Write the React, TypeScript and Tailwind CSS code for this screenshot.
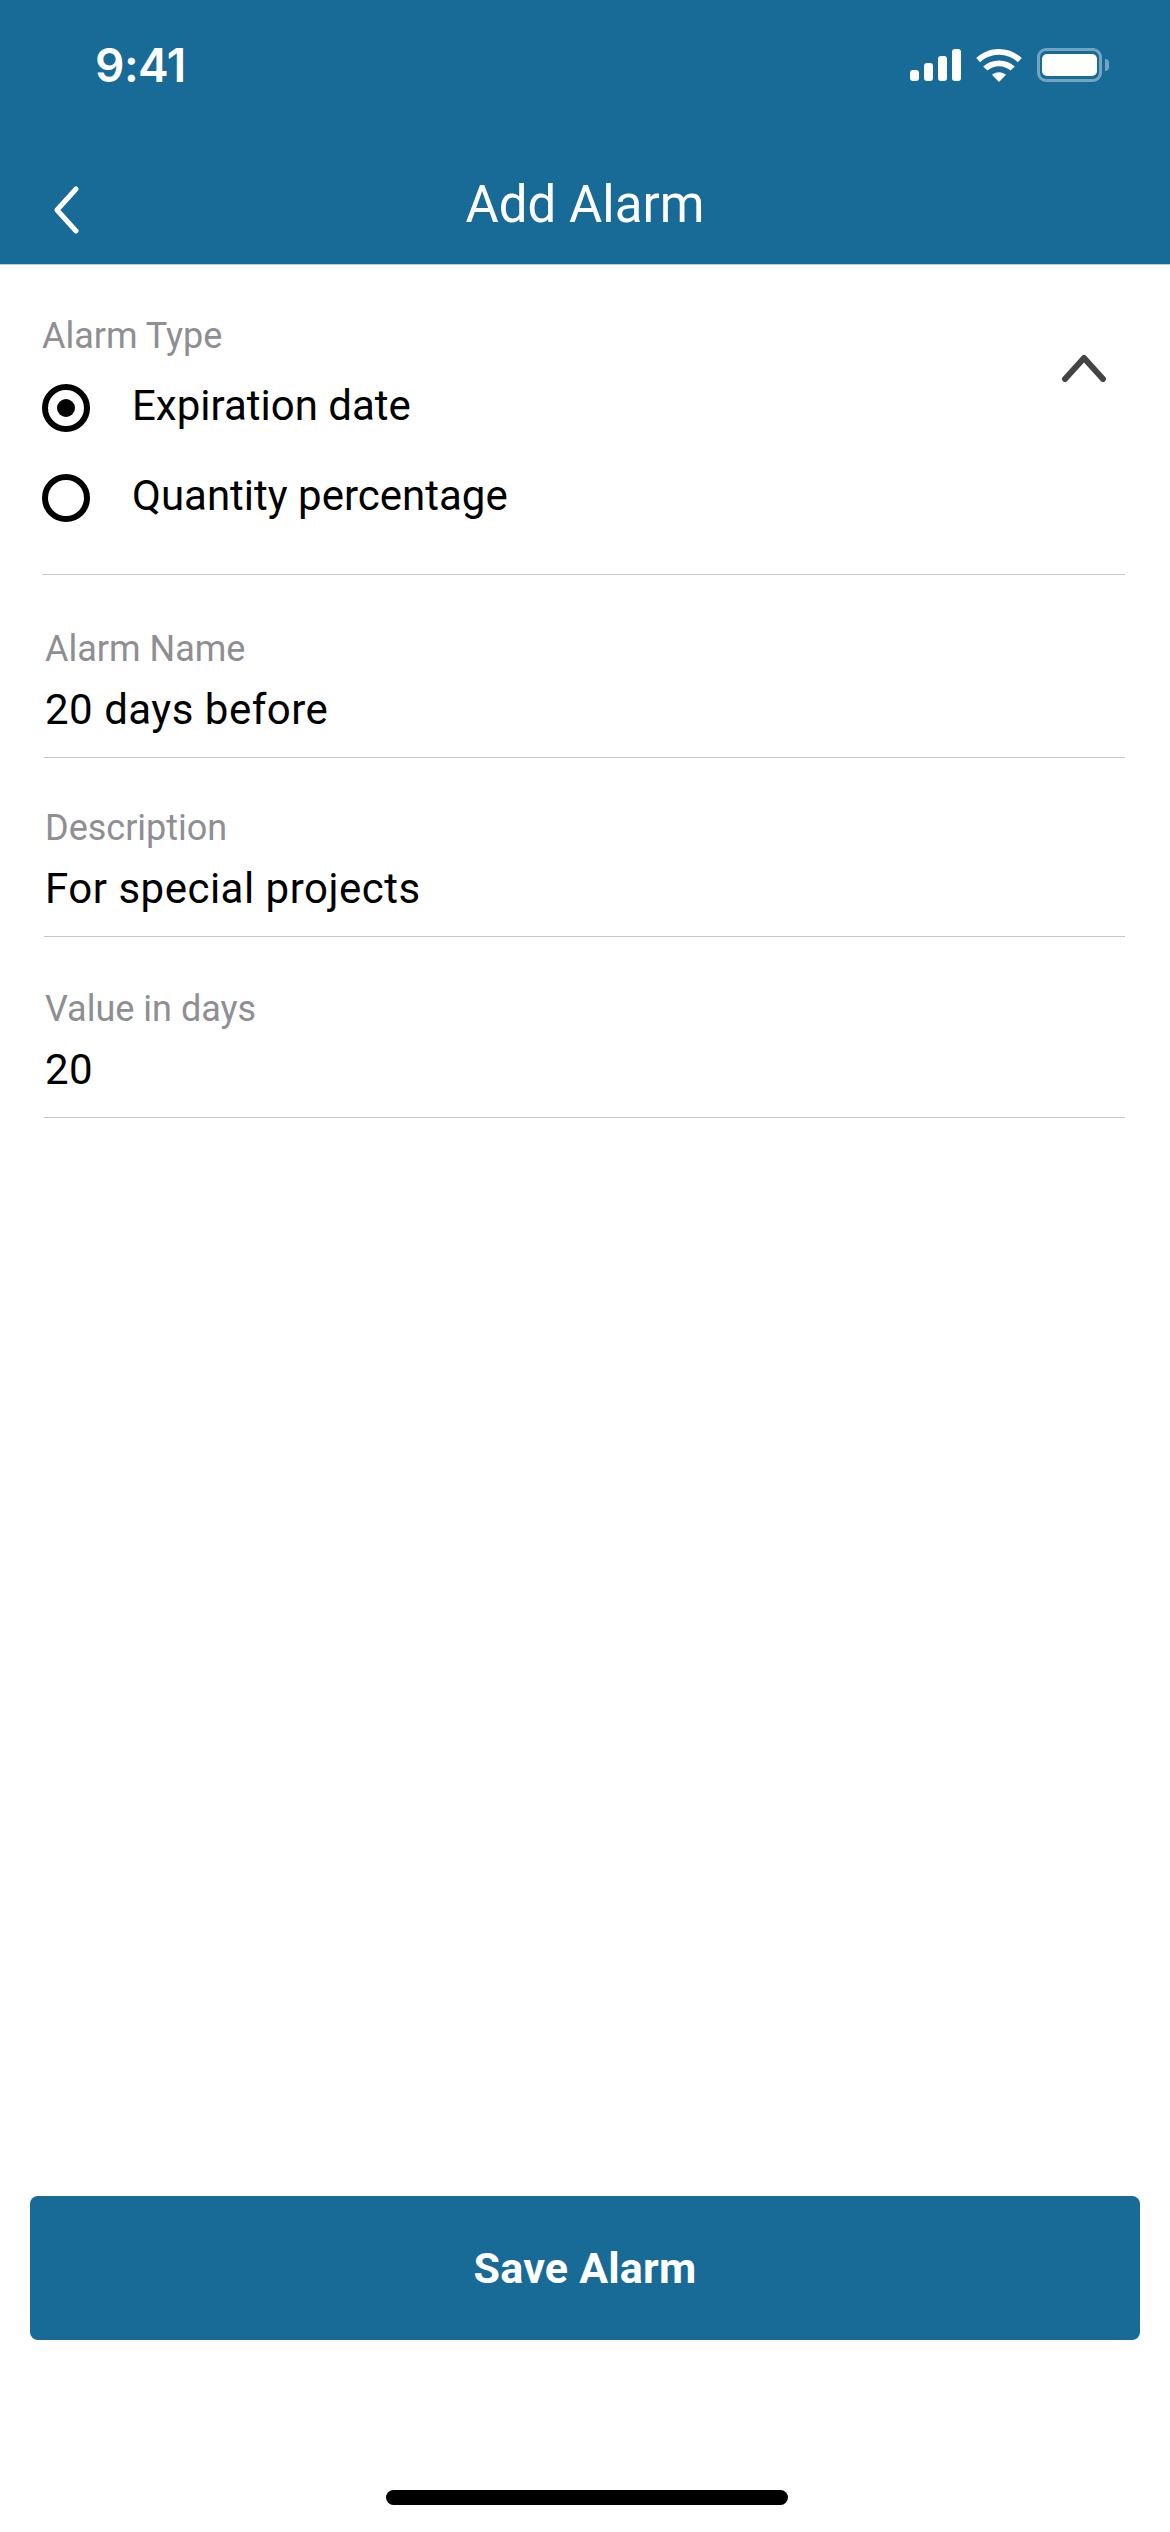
import React from "react";

const fieldData = [
  { label: "Alarm Name", value: "20 days before", height: "h-[183px]" },
  { label: "Description", value: "For special projects", height: "h-[179px]" },
  { label: "Value in days", value: "20", height: "h-[181px]" },
];

function SignalIcon() {
  return (
    <svg width="51" height="32" viewBox="0 0 51 32" fill="white">
      <rect x="0" y="21" width="9" height="11" rx="3" />
      <rect x="14" y="14" width="9" height="18" rx="3" />
      <rect x="28" y="7" width="9" height="25" rx="3" />
      <rect x="42" y="0" width="9" height="32" rx="3" />
    </svg>
  );
}

function WifiIcon() {
  return (
    <svg width="46" height="33" viewBox="0 0 46 33" fill="white">
      <path d="M23 0C31.8 0 39.8 3.4 45.8 9L41.8 13.2C36.9 8.6 30.3 5.8 23 5.8S9.1 8.6 4.2 13.2L0.2 9C6.2 3.4 14.2 0 23 0Z" />
      <path d="M23 11.4C29 11.4 34.6 13.6 38.8 17.4L34.6 21.6C31.5 18.9 27.4 17.2 23 17.2S14.5 18.9 11.4 21.6L7.2 17.4C11.4 13.6 17 11.4 23 11.4Z" />
      <path d="M23 23.2C25.7 23.2 28.1 24.2 30 25.8L23 33L16 25.8C17.9 24.2 20.3 23.2 23 23.2Z" />
    </svg>
  );
}

function BatteryIcon() {
  return (
    <div className="flex items-center gap-[3px]">
      <div className="w-[65px] h-[34px] rounded-[9px] border-[3px] border-white/40 px-[2px] py-[3px]">
        <div className="w-full h-full rounded-[5px] bg-white" />
      </div>
      <div className="w-[4px] h-[12px] rounded-r-full bg-white/40" />
    </div>
  );
}

function Radio({ checked, label }: { checked?: boolean; label: string }) {
  return (
    <div className="flex items-center h-[90px]">
      <div className="mt-[4px] w-[48px] h-[48px] rounded-full border-[6px] border-black flex items-center justify-center">
        {checked && <div className="w-[18px] h-[18px] rounded-full bg-black" />}
      </div>
      <span className="ml-[42px] text-[42px] leading-[50px] text-black">{label}</span>
    </div>
  );
}

export default function App() {
  return (
    <div className="w-[1170px] h-[2532px] flex flex-col bg-white font-['Roboto',sans-serif] overflow-hidden">
      <header className="h-[265px] shrink-0 bg-[#186a97] border-b border-[#c6cdd2] text-white flex flex-col">
        <div className="h-[130px] pt-[38px] pl-[95px] pr-[61px] flex items-start justify-between">
          <span className="font-['Inter',sans-serif] font-semibold text-[46px] leading-[54px] tracking-[-0.5px]">9:41</span>
          <div className="flex items-center gap-[15px] mt-[10px]">
            <SignalIcon />
            <WifiIcon />
            <BatteryIcon />
          </div>
        </div>
        <div className="relative flex-1 flex items-center justify-center pt-[16px]">
          <svg className="absolute left-[53px] top-[56px]" width="26" height="48" viewBox="0 0 26 48" fill="none" stroke="white" strokeWidth="5" strokeLinecap="round" strokeLinejoin="round">
            <path d="M23 3L4 24L23 45" />
          </svg>
          <h1 className="text-[51px] leading-[60px] font-normal">Add Alarm</h1>
        </div>
      </header>

      <main className="flex-1 flex flex-col">
        <section className="relative ml-[42px] mr-[45px] h-[310px] border-b border-[#c6c6c8] pt-[50px]">
          <div className="text-[36px] leading-[42px] text-[#8e8e93]">Alarm Type</div>
          <div className="mt-[4px]">
            <Radio checked label="Expiration date" />
            <Radio label="Quantity percentage" />
          </div>
          <svg className="absolute right-[18px] top-[89px]" width="46" height="28" viewBox="0 0 46 28" fill="none" stroke="#444444" strokeWidth="6" strokeLinecap="round" strokeLinejoin="round">
            <path d="M4 25L23 4L42 25" />
          </svg>
        </section>

        {fieldData.map((field) => (
          <div key={field.label} className={`ml-[44px] mr-[45px] ${field.height} border-b border-[#c6c6c8] flex flex-col justify-end pl-[1px] pb-[23px]`}>
            <div className="text-[36px] leading-[42px] text-[#8e8e93]">{field.label}</div>
            <div className="mt-[16px] text-[42px] leading-[48px] tracking-[0.5px] text-black">{field.value}</div>
          </div>
        ))}

        <div className="mt-auto px-[30px]">
          <button className="w-full h-[144px] rounded-[8px] bg-[#186a97] text-white text-[43px] tracking-[0.2px] font-bold">Save Alarm</button>
        </div>
        <div className="h-[192px] flex items-end justify-center pl-[3px] pb-[27px]">
          <div className="w-[402px] h-[15px] rounded-full bg-black" />
        </div>
      </main>
    </div>
  );
}
